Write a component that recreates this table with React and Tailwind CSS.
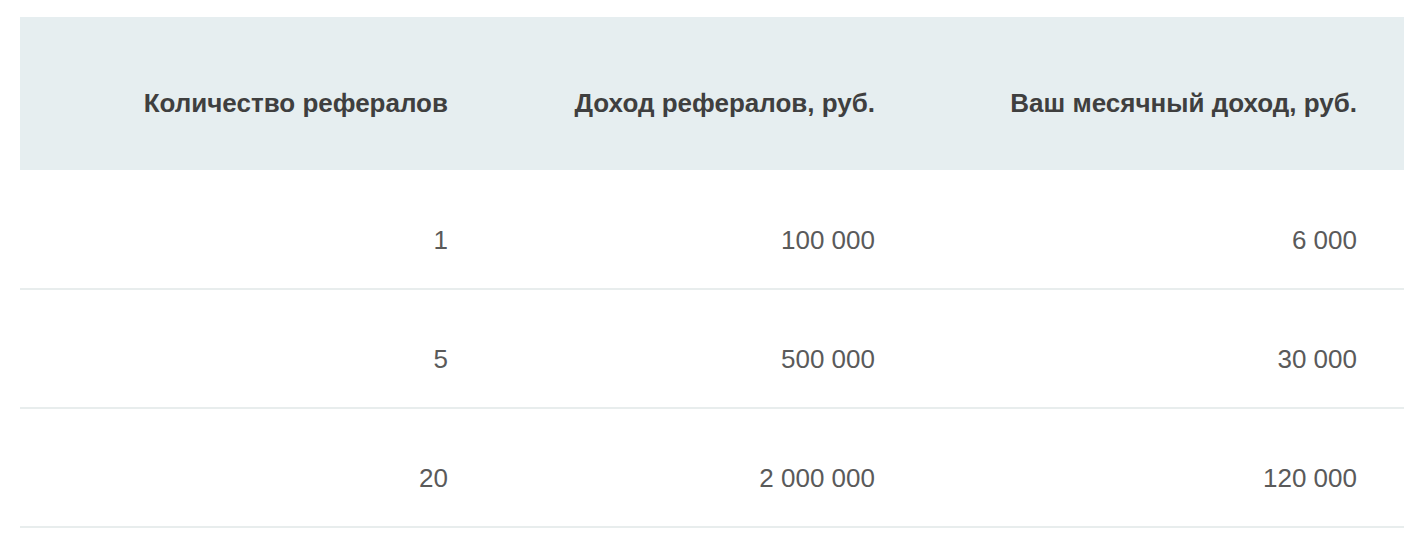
import React from 'react';

const rows = [
  ['1', '100 000', '6 000'],
  ['5', '500 000', '30 000'],
  ['20', '2 000 000', '120 000'],
];

const App = () => {
  return (
    <div className="min-h-screen bg-white pt-[17px] px-5 font-['Liberation_Sans',Arial,sans-serif]">
      <table className="w-full table-fixed border-collapse">
        <colgroup>
          <col className="w-[475px]" />
          <col className="w-[427px]" />
          <col className="w-[482px]" />
        </colgroup>
        <thead>
          <tr className="bg-[#e6eef0] h-[153px]">
            <th className="pr-[47px] pt-[20px] text-right text-[26px] font-bold text-[#3f3f3f]">Количество рефералов</th>
            <th className="pr-[47px] pt-[20px] text-right text-[26px] font-bold text-[#3f3f3f]">Доход рефералов, руб.</th>
            <th className="pr-[47px] pt-[20px] text-right text-[26px] font-bold text-[#3f3f3f]">Ваш месячный доход, руб.</th>
          </tr>
        </thead>
        <tbody>
          {rows.map((r, i) => (
            <tr key={i} className="h-[119px] border-b-2 border-[#e8eded]">
              {r.map((c, j) => (
                <td key={j} className="pr-[47px] pt-[22px] text-right text-[26px] text-[#5a5a5a]">{c}</td>
              ))}
            </tr>
          ))}
        </tbody>
      </table>
    </div>
  );
};

export default App;
